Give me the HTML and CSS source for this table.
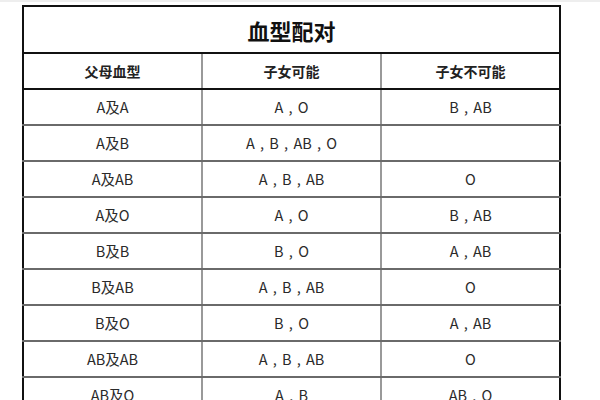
FILE: index.html
```html
<!DOCTYPE html>
<html>
<head>
<meta charset="utf-8">
<link rel="stylesheet" href="styles.css">
</head>
<body>
<div class="topline"></div>
<table class="bt">
  <tr class="title-row"><td colspan="3" class="title">血型配对</td></tr>
  <tr class="head-row"><th>父母血型</th><th>子女可能</th><th>子女不可能</th></tr>
  <tr><td>A及A</td><td>A , O</td><td>B , AB</td></tr>
  <tr><td>A及B</td><td>A , B , AB , O</td><td></td></tr>
  <tr><td>A及AB</td><td>A , B , AB</td><td>O</td></tr>
  <tr><td>A及O</td><td>A , O</td><td>B , AB</td></tr>
  <tr><td>B及B</td><td>B , O</td><td>A , AB</td></tr>
  <tr><td>B及AB</td><td>A , B , AB</td><td>O</td></tr>
  <tr><td>B及O</td><td>B , O</td><td>A , AB</td></tr>
  <tr><td>AB及AB</td><td>A , B , AB</td><td>O</td></tr>
  <tr><td>AB及O</td><td>A , B</td><td>AB , O</td></tr>
</table>
</body>
</html>
```
FILE: styles.css
```css
html, body {
  margin: 0;
  padding: 0;
  background: #fff;
}
body {
  width: 600px;
  height: 400px;
  overflow: hidden;
  font-family: "Noto Sans CJK SC", "Noto Sans", sans-serif;
  color: #2a2a2a;
}
.topline {
  height: 2px;
  background: #eeeeee;
  margin-bottom: 3px;
}
.bt {
  margin-left: 22px;
  border-collapse: collapse;
  border: 2px solid #111;
  table-layout: fixed;
  width: 539px;
}
.bt td, .bt th {
  padding: 0;
  text-align: center;
  font-size: 14.5px;
  word-spacing: 2px;
  height: 34px;
  border-left: 2px solid #999;
  border-right: 2px solid #999;
  border-bottom: 2px solid #6a6a6a;
  line-height: 16px;
}
.bt th {
  font-weight: bold;
  font-size: 14px;
  word-spacing: 0;
  color: #222;
  border-bottom: 2px solid #111;
}
.bt td.title {
  height: 45px;
  font-size: 22px;
  font-weight: bold;
  color: #111;
  border-bottom: 2px solid #111;
  line-height: 26px;
}
.bt tr > *:first-child { border-left: 2px solid #111; }
.bt tr > *:last-child { border-right: 2px solid #111; }
.bt th:nth-child(1), .bt tr td:nth-child(1):not(.title) { width: 178px; }
.bt th:nth-child(2) { width: 180px; }
```
